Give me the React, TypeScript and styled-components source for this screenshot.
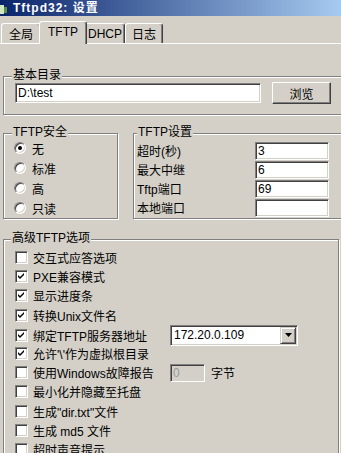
import React from "react";
import styled, { createGlobalStyle } from "styled-components";

const GlobalStyle = createGlobalStyle`
  html, body { margin: 0; padding: 0; background: #d4d0c8; overflow: hidden; }
  body {
    font-family: "Liberation Sans", "Noto Sans CJK SC", sans-serif;
    font-size: 12px;
    color: #000;
  }
`;

const Window = styled.div`
  width: 341px;
  height: 453px;
  overflow: hidden;
  background: #d4d0c8;
  display: flex;
  flex-direction: column;
`;

const TitleBar = styled.div`
  height: 16px;
  flex: none;
  display: flex;
  align-items: center;
  background: linear-gradient(90deg, #0a246a 0%, #a6caf0 100%);
`;

const TitleIcon = styled.svg`
  width: 10px;
  height: 14px;
  margin-right: 3px;
  flex: none;
`;

const TitleText = styled.span`
  color: #fff;
  font-weight: bold;
  font-size: 12px;
  letter-spacing: 1px;
  line-height: 16px;
  white-space: nowrap;
`;

const TabRow = styled.div`
  height: 27px;
  flex: none;
  display: flex;
  align-items: flex-end;
  padding-left: 1px;
`;

const Tab = styled.div<{ $active?: boolean; $w: number }>`
  position: relative;
  z-index: ${(p) => (p.$active ? 3 : 1)};
  box-sizing: border-box;
  width: ${(p) => p.$w}px;
  height: ${(p) => (p.$active ? 23 : 20)}px;
  margin: ${(p) => (p.$active ? "0 -2px -1px -2px" : "0")};
  background: #d4d0c8;
  border-top: 1px solid #fff;
  border-left: 1px solid #fff;
  border-right: 1px solid #404040;
  box-shadow: inset -1px 0 0 #808080;
  border-radius: 3px 3px 0 0;
  display: flex;
  align-items: center;
  justify-content: center;
  padding-bottom: ${(p) => (p.$active ? 3 : 0)}px;
  white-space: nowrap;
`;

const Panel = styled.div`
  position: relative;
  z-index: 2;
  flex: 1;
  border-top: 1px solid #fff;
  padding: 32px 0 0 3px;
  display: flex;
  flex-direction: column;
`;

const Group = styled.div<{ $w: number; $h?: number; $pt: number; $pl: number }>`
  position: relative;
  flex: none;
  box-sizing: border-box;
  width: ${(p) => p.$w}px;
  ${(p) => (p.$h ? `height: ${p.$h}px;` : "")}
  border: 1px solid #808080;
  box-shadow: inset 1px 1px 0 #fff, 1px 1px 0 #fff;
  padding: ${(p) => p.$pt}px 0 0 ${(p) => p.$pl}px;
`;

const Legend = styled.span<{ $left?: number }>`
  position: absolute;
  top: -9px;
  left: ${(p) => p.$left ?? 7}px;
  line-height: 14px;
  padding: 0 1px;
  background: #d4d0c8;
  white-space: nowrap;
`;

const DirRow = styled.div`
  display: flex;
  align-items: center;
  gap: 11px;
  height: 22px;
`;

const Edit = styled.div<{ $w: number; $h: number; $disabled?: boolean }>`
  box-sizing: border-box;
  width: ${(p) => p.$w}px;
  height: ${(p) => p.$h}px;
  flex: none;
  background: ${(p) => (p.$disabled ? "#d4d0c8" : "#fff")};
  color: ${(p) => (p.$disabled ? "#9a9a9a" : "#000")};
  border: 1px solid;
  border-color: #808080 #fff #fff #808080;
  box-shadow: inset 1px 1px 0 #404040, inset -1px -1px 0 #d4d0c8;
  display: flex;
  align-items: center;
  padding: 0 2px;
  white-space: nowrap;
  overflow: hidden;
`;

const Button = styled.div`
  box-sizing: border-box;
  width: 59px;
  height: 22px;
  flex: none;
  border: 1px solid;
  border-color: #fff #404040 #404040 #fff;
  box-shadow: inset -1px -1px 0 #808080;
  display: flex;
  align-items: center;
  justify-content: center;
`;

const GroupRow = styled.div`
  display: flex;
  gap: 15px;
  margin-top: 18px;
  margin-right: -20px;
`;

const RadioRow = styled.div`
  height: 20px;
  display: flex;
  align-items: center;
  gap: 6px;
  white-space: nowrap;
`;

const Radio = styled.span<{ $on?: boolean }>`
  box-sizing: border-box;
  width: 12px;
  height: 12px;
  flex: none;
  border-radius: 50%;
  border: 1px solid;
  border-color: #808080 #fff #fff #808080;
  background: #fff;
  box-shadow: inset 1px 1px 0 #404040, inset -1px -1px 0 #d4d0c8;
  display: flex;
  align-items: center;
  justify-content: center;
  &::after {
    content: "";
    width: 4px;
    height: 4px;
    border-radius: 50%;
    background: ${(p) => (p.$on ? "#000" : "transparent")};
  }
`;

const SettingRow = styled.div`
  height: 19px;
  display: grid;
  grid-template-columns: 118px 74px;
  align-items: center;
  white-space: nowrap;
`;

const AdvRow = styled.div`
  height: 19.2px;
  display: grid;
  grid-template-columns: 155px auto;
  align-items: center;
`;

const CheckLabel = styled.div`
  display: flex;
  align-items: center;
  gap: 5px;
  white-space: nowrap;
`;

const CheckBox = styled.span`
  box-sizing: border-box;
  width: 13px;
  height: 13px;
  flex: none;
  border: 1px solid;
  border-color: #808080 #fff #fff #808080;
  background: #fff;
  box-shadow: inset 1px 1px 0 #404040, inset -1px -1px 0 #d4d0c8;
  display: flex;
  align-items: center;
  justify-content: center;
`;

const Combo = styled.div`
  box-sizing: border-box;
  width: 128px;
  height: 21px;
  background: #fff;
  border: 1px solid;
  border-color: #808080 #fff #fff #808080;
  box-shadow: inset 1px 1px 0 #404040, inset -1px -1px 0 #d4d0c8;
  display: flex;
  align-items: center;
  padding: 1px 1px 1px 3px;
`;

const ComboText = styled.span`
  flex: 1;
  white-space: nowrap;
`;

const DropButton = styled.div`
  box-sizing: border-box;
  width: 16px;
  height: 17px;
  background: #d4d0c8;
  border: 1px solid;
  border-color: #d4d0c8 #404040 #404040 #d4d0c8;
  box-shadow: inset 1px 1px 0 #fff, inset -1px -1px 0 #808080;
  display: flex;
  align-items: center;
  justify-content: center;
`;

const SpinCell = styled.div`
  display: flex;
  align-items: center;
  gap: 6px;
`;

const Check = () => (
  <svg width="7" height="7" viewBox="0 0 7 7">
    <polygon points="0,2 2,4 6,0 6,2 2,6 0,4" fill="#000" />
  </svg>
);

const options: { label: string; checked: boolean; extra?: "combo" | "spin" }[] = [
  { label: "交互式应答选项", checked: false },
  { label: "PXE兼容模式", checked: true },
  { label: "显示进度条", checked: true },
  { label: "转换Unix文件名", checked: true },
  { label: "绑定TFTP服务器地址", checked: true, extra: "combo" },
  { label: "允许'\\'作为虚拟根目录", checked: true },
  { label: "使用Windows故障报告", checked: false, extra: "spin" },
  { label: "最小化并隐藏至托盘", checked: false },
  { label: "生成\"dir.txt\"文件", checked: false },
  { label: "生成 md5 文件", checked: false },
  { label: "超时声音提示", checked: false },
];

const security = ["无", "标准", "高", "只读"];
const settings = [
  { label: "超时(秒)", value: "3" },
  { label: "最大中继", value: "6" },
  { label: "Tftp端口", value: "69" },
  { label: "本地端口", value: "" },
];

export default function App() {
  return (
    <Window>
      <GlobalStyle />
      <TitleBar>
        <TitleIcon viewBox="0 0 10 14">
          <rect x="0" y="4" width="4" height="9" fill="#cfe8c0" />
          <rect x="4" y="6" width="3" height="6" fill="#5d8f4c" />
        </TitleIcon>
        <TitleText>Tftpd32: 设置</TitleText>
      </TitleBar>
      <TabRow>
        <Tab $w={40}>全局</Tab>
        <Tab $w={48} $active>
          TFTP
        </Tab>
        <Tab $w={40}>DHCP</Tab>
        <Tab $w={38}>日志</Tab>
      </TabRow>
      <Panel>
        <Group $w={360} $h={39} $pt={5} $pl={11}>
          <Legend $left={8}>基本目录</Legend>
          <DirRow>
            <Edit $w={246} $h={20}>D:\test</Edit>
            <Button>浏览</Button>
          </DirRow>
        </Group>
        <GroupRow>
          <Group $w={115} $h={86} $pt={4} $pl={10}>
            <Legend $left={8}>TFTP安全</Legend>
            {security.map((s, i) => (
              <RadioRow key={s}>
                <Radio $on={i === 0} />
                {s}
              </RadioRow>
            ))}
          </Group>
          <Group $w={226} $h={86} $pt={7} $pl={3}>
            <Legend $left={3}>TFTP设置</Legend>
            {settings.map((s) => (
              <SettingRow key={s.label}>
                <span>{s.label}</span>
                <Edit $w={74} $h={18}>{s.value}</Edit>
              </SettingRow>
            ))}
          </Group>
        </GroupRow>
        <Group $w={336} $pt={8} $pl={11} style={{ marginTop: 20 }}>
          <Legend $left={7}>高级TFTP选项</Legend>
          {options.map((o) => (
            <AdvRow key={o.label}>
              <CheckLabel>
                <CheckBox>{o.checked && <Check />}</CheckBox>
                {o.label}
              </CheckLabel>
              {o.extra === "combo" && (
                <Combo>
                  <ComboText>172.20.0.109</ComboText>
                  <DropButton>
                    <svg width="7" height="4" viewBox="0 0 7 4">
                      <polygon points="0,0 7,0 3.5,4" fill="#000" />
                    </svg>
                  </DropButton>
                </Combo>
              )}
              {o.extra === "spin" && (
                <SpinCell>
                  <Edit $w={35} $h={18} $disabled>
                    0
                  </Edit>
                  <span>字节</span>
                </SpinCell>
              )}
            </AdvRow>
          ))}
        </Group>
      </Panel>
    </Window>
  );
}
